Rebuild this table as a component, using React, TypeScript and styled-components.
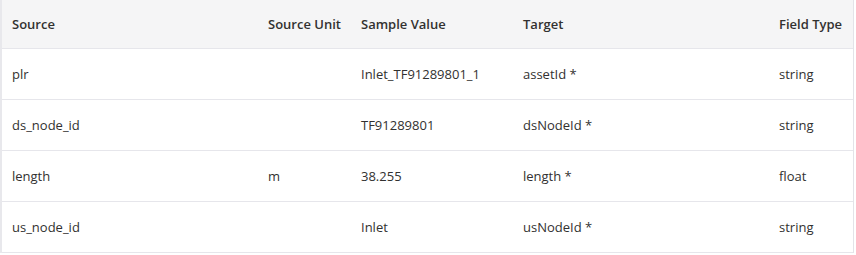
import React from "react";
import styled, { createGlobalStyle } from "styled-components";

const GlobalStyle = createGlobalStyle`
    html, body {
        margin: 0;
        padding: 0;
        background: #ffffff;
        font-family: "Open Sans", "Noto Sans", "Liberation Sans", sans-serif;
    }
`;

type Mapping = {
    source: string;
    unit: string;
    sample: string;
    target: string;
    fieldType: string;
};

const rows: Mapping[] = [
    { source: "plr", unit: "", sample: "Inlet_TF91289801_1", target: "assetId *", fieldType: "string" },
    { source: "ds_node_id", unit: "", sample: "TF91289801", target: "dsNodeId *", fieldType: "string" },
    { source: "length", unit: "m", sample: "38.255", target: "length *", fieldType: "float" },
    { source: "us_node_id", unit: "", sample: "Inlet", target: "usNodeId *", fieldType: "string" },
];

const columns = [
    { label: "Source", width: 256 },
    { label: "Source Unit", width: 93 },
    { label: "Sample Value", width: 162 },
    { label: "Target", width: 256 },
    { label: "Field Type", width: 84 },
];

const Frame = styled.div`
    width: 851px;
    border-left: 2px solid #e8e8ec;
    border-right: 1px solid #e3e3e8;
    overflow: hidden;
`;

const Table = styled.table`
    width: 851px;
    border-collapse: collapse;
    table-layout: fixed;
    font-size: 13px;
    color: #323130;
`;

const HeadCell = styled.th<{ $width: number }>`
    width: ${p => p.$width}px;
    height: 48px;
    padding: 0 10px;
    text-align: left;
    font-weight: 600;
    white-space: nowrap;
    background: #f5f5f6;
    border-bottom: 1px solid #e6e6eb;
    box-sizing: border-box;
`;

const Cell = styled.td`
    height: 51px;
    padding: 0 10px;
    white-space: nowrap;
    border-bottom: 1px solid #e6e6eb;
    box-sizing: border-box;
`;

export default function App() {
    return (
        <>
            <GlobalStyle />
            <Frame>
                <Table>
                    <thead>
                        <tr>
                            {columns.map(c => (
                                <HeadCell key={c.label} $width={c.width}>{c.label}</HeadCell>
                            ))}
                        </tr>
                    </thead>
                    <tbody>
                        {rows.map(r => (
                            <tr key={r.source}>
                                <Cell>{r.source}</Cell>
                                <Cell>{r.unit}</Cell>
                                <Cell>{r.sample}</Cell>
                                <Cell>{r.target}</Cell>
                                <Cell>{r.fieldType}</Cell>
                            </tr>
                        ))}
                    </tbody>
                </Table>
            </Frame>
        </>
    );
}
